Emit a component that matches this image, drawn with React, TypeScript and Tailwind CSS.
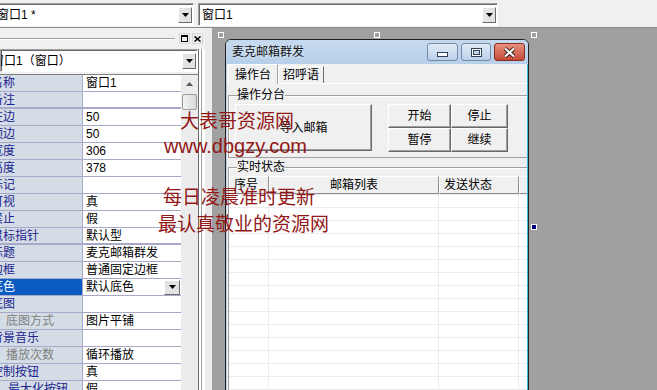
import React from "react";

type Prop = { label: string; value: string; sub?: boolean; active?: boolean; thick?: boolean; shift?: boolean };

const props: Prop[] = [
  { label: "名称", value: "窗口1" },
  { label: "备注", value: "", thick: true },
  { label: "左边", value: "50" },
  { label: "顶边", value: "50" },
  { label: "宽度", value: "306" },
  { label: "高度", value: "378" },
  { label: "标记", value: "" },
  { label: "可视", value: "真" },
  { label: "禁止", value: "假" },
  { label: "鼠标指针", value: "默认型", thick: true },
  { label: "标题", value: "麦克邮箱群发" },
  { label: "边框", value: "普通固定边框" },
  { label: "底色", value: "默认底色", active: true },
  { label: "底图", value: "" },
  { label: "底图方式", value: "图片平铺", sub: true },
  { label: "背景音乐", value: "" },
  { label: "播放次数", value: "循环播放", sub: true },
  { label: "控制按钮", value: "真" },
  { label: "最大化按钮", value: "假", shift: true },
];

const listRows = Array.from({ length: 16 }, (_, i) => i);

const DropBtn = ({ className = "" }: { className?: string }) => (
  <div
    className={`flex items-center justify-center bg-[#e3e3e3] border border-t-white border-l-white border-r-[#6a6a6a] border-b-[#6a6a6a] ${className}`}
  >
    <svg width="7" height="4" viewBox="0 0 7 4">
      <path d="M0 0h7L3.5 4z" fill="#000" />
    </svg>
  </div>
);

const Combo = ({ text, className = "" }: { text: string; className?: string }) => (
  <div
    className={`h-[23px] flex items-center bg-white border border-t-[#a0a0a0] border-l-[#a0a0a0] border-r-white border-b-white shadow-[inset_1px_1px_0_#696969] overflow-hidden ${className}`}
  >
    <span className="flex-1 pl-[3px] whitespace-nowrap overflow-hidden">{text}</span>
    <DropBtn className="w-[14px] h-[16px] mr-[1px]" />
  </div>
);

const RaisedBtn = ({ children, className = "" }: { children: React.ReactNode; className?: string }) => (
  <div
    className={`flex items-center justify-center bg-[#f0f0f0] border border-t-white border-l-white border-r-[#696969] border-b-[#696969] shadow-[inset_-1px_-1px_0_#a0a0a0] ${className}`}
  >
    {children}
  </div>
);

const Handle = ({ className = "", filled = false }: { className?: string; filled?: boolean }) => (
  <div
    className={`absolute w-[6px] h-[6px] border border-white ${filled ? "bg-[#000080]" : "bg-[#a0a0a0]"} ${className}`}
  />
);

export default function App() {
  return (
    <div className="relative w-[657px] h-[390px] overflow-hidden bg-[#f0f0f0] flex flex-col text-[12px] leading-[14px] text-black font-['Liberation_Sans','Noto_Sans_CJK_SC',sans-serif]">
      {/* toolbar */}
      <div className="h-[28px] shrink-0 flex items-start pt-[3px] border-b border-[#8c8c8c]">
        <Combo text="窗口1 *" className="-ml-[3px] w-[197px] [&>span]:-ml-[4px]" />
        <Combo text="窗口1" className="ml-[4px] w-[300px]" />
      </div>

      <div className="flex flex-1 min-h-0">
        {/* property panel */}
        <div className="w-[213px] shrink-0 flex">
          <div className="w-[205px] flex flex-col">
            <div className="h-[21px] shrink-0 flex items-center">
              <div className="flex-1 h-[2px] border-t border-[#a0a0a0] border-b border-b-white mr-[4px]" />
              <div className="w-[11px] h-[11px] flex items-center justify-center border border-[#d8d8d8]">
                <svg width="7" height="7" viewBox="0 0 7 7">
                  <rect x="0.5" y="0.5" width="6" height="6" fill="none" stroke="#000" />
                  <rect x="0" y="0" width="7" height="2" fill="#000" />
                </svg>
              </div>
              <div className="w-[11px] h-[11px] ml-[2px] mr-[2px] flex items-center justify-center border border-[#d8d8d8]">
                <svg width="7" height="6" viewBox="0 0 7 6">
                  <path d="M0.5 0.5L6.5 5.5M6.5 0.5L0.5 5.5" stroke="#000" strokeWidth="1.6" />
                </svg>
              </div>
            </div>
            <div className="flex flex-1 min-h-0">
              <div className="w-[198px] flex flex-col">
                <Combo text="窗口1（窗口）" className="w-[198px] h-[21px] [&>span]:-ml-[12px]" />
                <div className="mt-[2px] flex-1 flex border-t border-[#808080] overflow-hidden">
                  <div className="w-[181px] flex flex-col">
                    {props.map((p) => (
                      <div
                        key={p.label}
                        className={`h-[17px] shrink-0 flex border-[#a8a8c8] ${p.thick ? "border-b-2" : "border-b"}`}
                      >
                        <div
                          className={`w-[83px] shrink-0 overflow-hidden whitespace-nowrap border-r border-[#a8a8c8] flex items-center ${
                            p.active ? "bg-[#0a5cc2] text-white" : p.sub ? "bg-[#d4dde5] text-[#808080]" : "bg-[#d4dde5] text-[#1c2490]"
                          }`}
                        >
                          <span className={p.sub ? "pl-[6px]" : p.shift ? "pl-[8px]" : "-ml-[9px]"}>{p.label}</span>
                        </div>
                        <div className="flex-1 bg-white pl-[3px] flex items-center whitespace-nowrap">
                          <span>{p.value}</span>
                          {p.active && <DropBtn className="ml-auto mr-[1px] w-[16px] h-[15px] bg-[#d4d0c8]" />}
                        </div>
                      </div>
                    ))}
                  </div>
                  <div className="w-[17px] bg-[#ececec] flex flex-col items-center">
                    <div className="h-[17px] w-full flex items-center justify-center">
                      <svg width="7" height="4" viewBox="0 0 7 4">
                        <path d="M0 4h7L3.5 0z" fill="#5a5a5a" />
                      </svg>
                    </div>
                    <div className="mt-[2px] w-[15px] h-[16px] rounded-[2px] border border-[#9a9a9a] bg-gradient-to-r from-[#f4f4f4] to-[#d8d8d8]" />
                  </div>
                </div>
              </div>
              <div className="w-[7px] border-l border-[#6d6d6d] bg-white flex">
                <div className="ml-[2px] w-[1px] bg-[#a0a0a0]" />
              </div>
            </div>
          </div>
          <div className="w-[8px] bg-[#ececec] border-r border-[#a0a0a0]" />
        </div>

        {/* design area */}
        <div className="flex-1 relative overflow-hidden bg-[#a0a0a0]">
          <div className="ml-[12px] mt-[11px] w-[304px] h-[380px] flex flex-col rounded-t-[6px] border border-[#202020] bg-[#bcd3ea] overflow-hidden">
            <div className="h-[24px] shrink-0 flex items-center bg-gradient-to-b from-[#c6daef] to-[#b7cfe9]">
              <span className="pl-[6px] text-[#111] [text-shadow:0_0_4px_#e8f2ff]">麦克邮箱群发</span>
              <div className="ml-auto mr-[3px] flex gap-[3px]">
                <div className="w-[31px] h-[18px] rounded-[3px] border border-[#7189ab] bg-gradient-to-b from-[#e1ebf6] to-[#bcd0ea] flex items-end justify-center pb-[3px]">
                  <svg width="11" height="5" viewBox="0 0 11 5">
                    <rect x="0.5" y="0.5" width="10" height="4" fill="#fff" stroke="#2f4058" />
                  </svg>
                </div>
                <div className="w-[30px] h-[18px] rounded-[3px] border border-[#7189ab] bg-gradient-to-b from-[#e1ebf6] to-[#bcd0ea] flex items-center justify-center">
                  <svg width="11" height="9" viewBox="0 0 11 9">
                    <rect x="0.5" y="0.5" width="10" height="8" fill="#fff" stroke="#2f4058" />
                    <rect x="2.5" y="2.5" width="6" height="4" fill="#c5d6ea" stroke="#2f4058" />
                  </svg>
                </div>
                <div className="w-[31px] h-[18px] rounded-[3px] border border-[#8a2a20] bg-gradient-to-b from-[#e8907f] to-[#c34a38] flex items-center justify-center">
                  <svg width="13" height="11" viewBox="0 0 13 11">
                    <path d="M2 1.5L11 9.5M11 1.5L2 9.5" stroke="#3a2020" strokeWidth="4" />
                    <path d="M2 1.5L11 9.5M11 1.5L2 9.5" stroke="#fff" strokeWidth="2" />
                  </svg>
                </div>
              </div>
            </div>

            <div className="flex-1 ml-[1px] bg-[#f0f0f0] border-r border-[#3cb8e8] overflow-hidden flex flex-col">
              {/* tabs */}
              <div className="h-[20px] shrink-0 flex items-end border-b border-white pl-[1px]">
                <div className="relative z-10 -mb-[1px] w-[50px] h-[20px] flex items-center justify-center bg-[#f0f0f0] border-t border-l border-white border-r border-r-[#a0a0a0]">
                  操作台
                </div>
                <div className="w-[46px] h-[17px] flex items-center justify-center border-t border-l border-white border-r border-r-[#696969]">
                  招呼语
                </div>
              </div>

              <fieldset className="mt-[4px] ml-[1px] w-[320px] border border-[#a0a0a0] shadow-[inset_1px_1px_0_#fff]">
                <legend className="ml-[8px] leading-[14px]">操作分台</legend>
                <div className="h-[55px] pt-[2px] flex items-start">
                  <RaisedBtn className="ml-[6px] w-[137px] h-[47px]">导入邮箱</RaisedBtn>
                  <div className="ml-[16px] grid grid-cols-[63px_57px] grid-rows-[24px_24px]">
                    <RaisedBtn>开始</RaisedBtn>
                    <RaisedBtn>停止</RaisedBtn>
                    <RaisedBtn>暂停</RaisedBtn>
                    <RaisedBtn>继续</RaisedBtn>
                  </div>
                </div>
              </fieldset>

              <fieldset className="mt-[2px] ml-[1px] w-[320px] flex-1 border border-[#a0a0a0] shadow-[inset_1px_1px_0_#fff]">
                <legend className="ml-[8px] leading-[14px]">实时状态</legend>
                <div className="mt-[2px] bg-white">
                  <div className="h-[18px] flex">
                    <div className="w-[40px] pl-[4px] flex items-center border-t border-l border-white border-r border-b border-r-[#8c8c8c] border-b-[#8c8c8c] bg-[#f0f0f0]">
                      序号
                    </div>
                    <div className="w-[170px] flex items-center justify-center border-t border-l border-white border-r border-b border-r-[#8c8c8c] border-b-[#8c8c8c] bg-[#f0f0f0]">
                      邮箱列表
                    </div>
                    <div className="w-[80px] pl-[4px] flex items-center border-t border-l border-white border-r border-b border-r-[#8c8c8c] border-b-[#8c8c8c] bg-[#f0f0f0]">
                      发送状态
                    </div>
                    <div className="w-[30px] border-t border-l border-white border-r border-b border-r-[#8c8c8c] border-b-[#8c8c8c] bg-[#f0f0f0]" />
                  </div>
                  {listRows.map((i) => (
                    <div key={i} className="h-[13px] flex border-t border-[#ececec]">
                      <div className="w-[40px] border-r border-[#ececec]" />
                      <div className="w-[170px] border-r border-[#ececec]" />
                      <div className="w-[80px] border-r border-[#ececec]" />
                      <div className="flex-1" />
                    </div>
                  ))}
                </div>
              </fieldset>
            </div>
          </div>

          <Handle className="left-[5px] top-[4px]" />
          <Handle className="left-[161px] top-[4px]" />
          <Handle className="left-[318px] top-[4px]" />
          <Handle className="left-[318px] top-[196px]" filled />
        </div>
      </div>

      {/* watermark */}
      <div className="absolute inset-0 pointer-events-none text-[#921818] font-['Noto_Sans_CJK_SC',sans-serif]">
        <div className="absolute left-[180px] top-[110px] text-[19px] leading-[19px] whitespace-nowrap">大表哥资源网</div>
        <div className="absolute left-[164px] top-[136px] text-[20px] leading-[20px] whitespace-nowrap font-['Liberation_Sans',sans-serif]">
          www.dbgzy.com
        </div>
        <div className="absolute left-[163px] top-[186px] text-[19px] leading-[19px] whitespace-nowrap">每日凌晨准时更新</div>
        <div className="absolute left-[158px] top-[213px] text-[19px] leading-[19px] whitespace-nowrap">最认真敬业的资源网</div>
      </div>
    </div>
  );
}
